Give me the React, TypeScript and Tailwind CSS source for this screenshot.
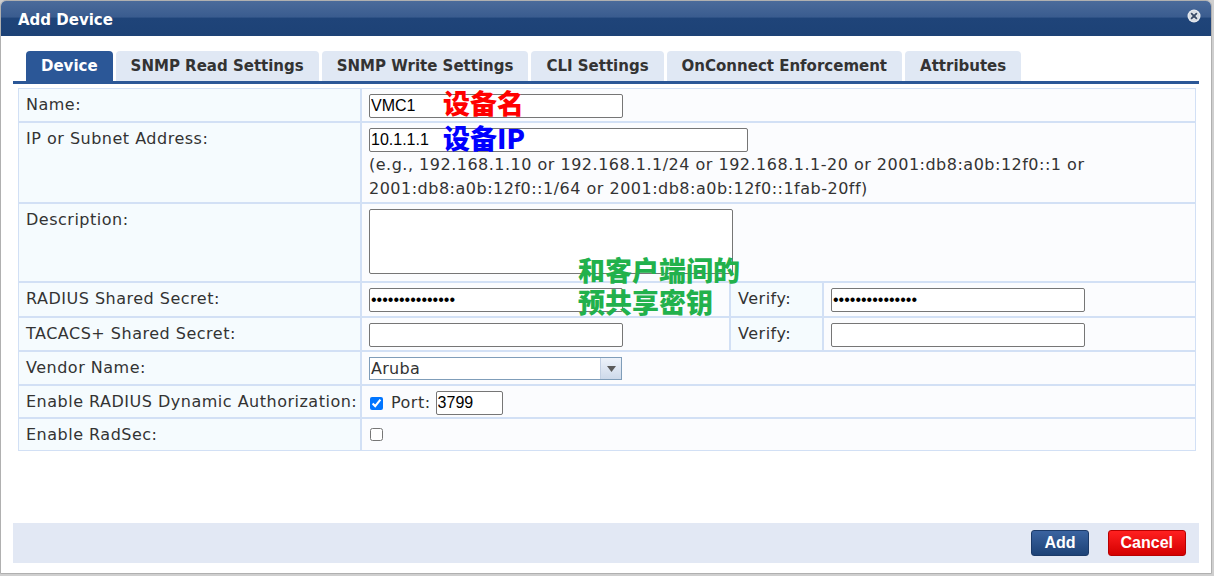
import React from 'react'

const TABS = [
  'Device',
  'SNMP Read Settings',
  'SNMP Write Settings',
  'CLI Settings',
  'OnConnect Enforcement',
  'Attributes',
]

const labelCell =
  'border border-[#d2e0f5] bg-[#f5fbfe] align-top pl-[7px] pt-[7px] text-[16px] leading-[18px] tracking-[0.5px] text-[#333]'
const valueCell = 'border border-[#d2e0f5] bg-[#fbfcfe] align-top pl-[7px] pt-[5px]'
const textInput =
  'block h-[24px] border border-[#767676] rounded-[2px] bg-white px-[1px] text-[16px] text-black outline-none'
const arial = { fontFamily: '"Liberation Sans", Arial, sans-serif' }
const cjk = { fontFamily: '"Noto Sans CJK SC", "Noto Sans", sans-serif' }

function CloseIcon() {
  return (
    <svg width="14" height="14" viewBox="0 0 14 14">
      <circle cx="7" cy="7" r="6.5" fill="#e9ecf1" />
      <circle cx="7" cy="7" r="5.5" fill="#d9dde4" />
      <path d="M4.6 4.6 L9.4 9.4 M9.4 4.6 L4.6 9.4" stroke="#3a4a66" strokeWidth="1.8" strokeLinecap="round" />
    </svg>
  )
}

export default function App() {
  return (
    <div className="h-[576px] w-[1214px] bg-[#cfcfcf]" style={{ fontFamily: '"DejaVu Sans", Verdana, sans-serif' }}>
      <div className="relative flex h-[574px] w-[1212px] flex-col overflow-hidden rounded-t-[6px] border border-[#b0b0b0] bg-white">
        {/* title bar */}
        <div className="flex h-[35px] shrink-0 justify-between bg-[linear-gradient(#4b6b9b_0%,#3a5c8f_45%,#1f4479_50%,#1d4276_100%)] pl-[17px] pr-[10px]">
          <span className="pt-[8px] text-[15px] font-bold text-white">Add Device</span>
          <div className="pt-[8px]">
            <CloseIcon />
          </div>
        </div>

        {/* tabs */}
        <div className="mx-[12px] mt-[15px] flex gap-[3px] border-b-[3px] border-[#2b5797] pl-[13px]">
          {TABS.map((t, i) => (
            <div
              key={t}
              className={
                i === 0
                  ? 'flex h-[30px] items-center rounded-t-[4px] bg-[#2b5797] px-[15px] text-[15px] font-bold text-white'
                  : 'flex h-[30px] items-center rounded-t-[4px] bg-[#e0e8f4] px-[15px] text-[15px] font-bold text-[#333]'
              }
            >
              {t}
            </div>
          ))}
        </div>

        {/* form table */}
        <div className="relative mx-[17px] mt-[4px]">
          <table className="w-[1178px] table-fixed border-separate border-spacing-0">
            <colgroup>
              <col className="w-[343px]" />
              <col className="w-[369px]" />
              <col className="w-[93px]" />
              <col className="w-[373px]" />
            </colgroup>
            <tbody>
              <tr className="h-[34px]">
                <td className={labelCell}>Name:</td>
                <td className={valueCell} colSpan={3}>
                  <input className={`${textInput} w-[254px]`} style={arial} defaultValue="VMC1" />
                </td>
              </tr>
              <tr className="h-[81px]">
                <td className={labelCell}>IP or Subnet Address:</td>
                <td className={valueCell} colSpan={3}>
                  <input className={`${textInput} w-[379px]`} style={arial} defaultValue="10.1.1.1" />
                  <div className="mt-[1px] text-[16px] leading-[24px] tracking-[0.5px] text-[#333]">
                    (e.g., 192.168.1.10 or 192.168.1.1/24 or 192.168.1.1-20 or 2001:db8:a0b:12f0::1 or
                    <br />
                    2001:db8:a0b:12f0::1/64 or 2001:db8:a0b:12f0::1fab-20ff)
                  </div>
                </td>
              </tr>
              <tr className="h-[79px]">
                <td className={labelCell}>Description:</td>
                <td className={valueCell} colSpan={3}>
                  <textarea className="block h-[65px] w-[364px] resize-none rounded-[2px] border border-[#767676] bg-white outline-none" />
                </td>
              </tr>
              <tr className="h-[35px]">
                <td className={labelCell}>RADIUS Shared Secret:</td>
                <td className={valueCell}>
                  <input type="password" className={`${textInput} w-[254px]`} style={arial} defaultValue="123456789012345" />
                </td>
                <td className={labelCell}>Verify:</td>
                <td className={valueCell}>
                  <input type="password" className={`${textInput} w-[254px]`} style={arial} defaultValue="123456789012345" />
                </td>
              </tr>
              <tr className="h-[34px]">
                <td className={labelCell}>TACACS+ Shared Secret:</td>
                <td className={valueCell}>
                  <input type="password" className={`${textInput} w-[254px]`} style={arial} defaultValue="" />
                </td>
                <td className={labelCell}>Verify:</td>
                <td className={valueCell}>
                  <input type="password" className={`${textInput} w-[254px]`} style={arial} defaultValue="" />
                </td>
              </tr>
              <tr className="h-[34px]">
                <td className={labelCell}>Vendor Name:</td>
                <td className={valueCell} colSpan={3}>
                  <div className="flex h-[23px] w-[253px] border border-[#7f9db9] bg-white">
                    <div className="flex-1 pl-[1px] text-[16px] leading-[21px] tracking-[0.3px] text-[#333]">Aruba</div>
                    <div className="flex w-[21px] items-center justify-center border-l border-[#c3d0e3] bg-[linear-gradient(#eef3fa,#cdd9ea)]">
                      <svg width="9" height="6" viewBox="0 0 9 6">
                        <path d="M0 0 H9 L4.5 6 Z" fill="#5a5a5a" />
                      </svg>
                    </div>
                  </div>
                </td>
              </tr>
              <tr className="h-[33px]">
                <td className={labelCell}>Enable RADIUS Dynamic Authorization:</td>
                <td className={valueCell} colSpan={3}>
                  <div className="flex items-center text-[16px] tracking-[0.5px] text-[#333]">
                    <input type="checkbox" defaultChecked className="m-0 ml-[1px] h-[13px] w-[13px]" />
                    <span className="ml-[8px]">Port:</span>
                    <input className={`${textInput} ml-[5px] w-[67px] tracking-normal`} style={arial} defaultValue="3799" />
                  </div>
                </td>
              </tr>
              <tr className="h-[33px]">
                <td className={labelCell}>Enable RadSec:</td>
                <td className={valueCell} colSpan={3}>
                  <input type="checkbox" className="m-0 ml-[1px] mt-[4px] h-[13px] w-[13px]" />
                </td>
              </tr>
            </tbody>
          </table>

          {/* annotations */}
          <div className="absolute left-[425px] top-[-1px] text-[27px] font-black leading-[32px] text-[#ff0000]" style={cjk}>
            设备名
          </div>
          <div className="absolute left-[425px] top-[34px] text-[27px] font-black leading-[32px] text-[#0000ff]" style={cjk}>
            设备IP
          </div>
          <div className="absolute left-[560px] top-[166px] text-[27px] font-black leading-[32px] text-[#22b14c]" style={cjk}>
            和客户端间的
            <br />
            预共享密钥
          </div>
        </div>

        {/* footer */}
        <div className="mx-[12px] mt-auto mb-[10px] flex h-[40px] items-center justify-end gap-[19px] bg-[#e2e8f4] pr-[13px]">
          <button
            className="h-[26px] rounded-[3px] border border-[#1b3a68] bg-[linear-gradient(#3a63a0,#1d4276)] px-[12px] text-[16px] font-bold text-white"
            style={arial}
          >
            Add
          </button>
          <button
            className="h-[26px] rounded-[3px] border border-[#b80000] bg-[linear-gradient(#ff2020,#d40000)] px-[12px] text-[16px] font-bold text-white"
            style={arial}
          >
            Cancel
          </button>
        </div>
      </div>
    </div>
  )
}
